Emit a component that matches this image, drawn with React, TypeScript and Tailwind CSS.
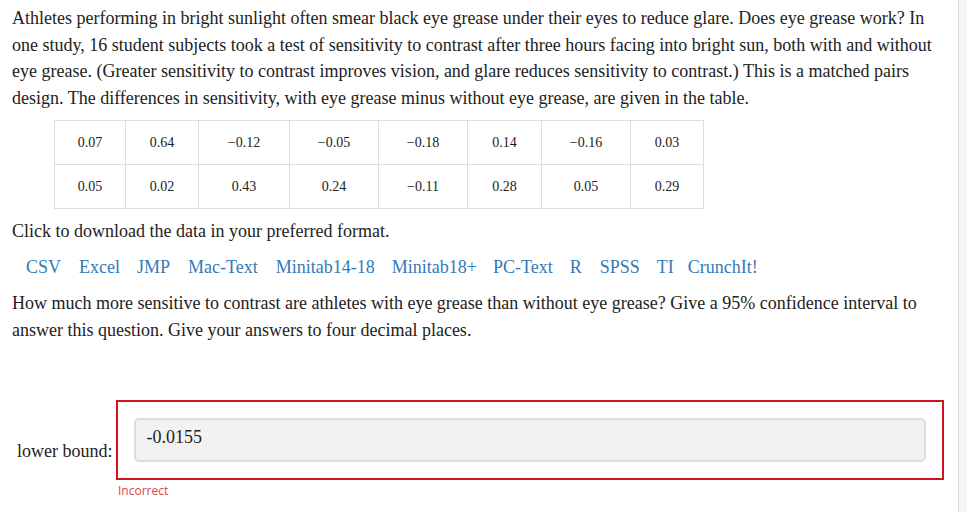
import React from "react";

const row1 = ["0.07", "0.64", "−0.12", "−0.05", "−0.18", "0.14", "−0.16", "0.03"];
const row2 = ["0.05", "0.02", "0.43", "0.24", "−0.11", "0.28", "0.05", "0.29"];
const widths = [71, 73, 91, 89, 89, 74, 89, 73];
const links: [string, string][] = [
  ["CSV", "ml-0"],
  ["Excel", "ml-[18px]"],
  ["JMP", "ml-[17px]"],
  ["Mac-Text", "ml-[18px]"],
  ["Minitab14-18", "ml-[18px]"],
  ["Minitab18+", "ml-[17px]"],
  ["PC-Text", "ml-[16px]"],
  ["R", "ml-[17px]"],
  ["SPSS", "ml-[18px]"],
  ["TI", "ml-[17px]"],
  ["CrunchIt!", "ml-[14px]"],
];

export default function App() {
  return (
    <div
      className="flex h-[512px] w-[967px] overflow-hidden bg-white text-[#222]"
      style={{ fontFamily: '"Liberation Serif", "Times New Roman", serif' }}
    >
      <div className="flex-1 min-w-0 pl-[12px] pr-[10px] pt-[5px]">
        <p className="text-[18px] leading-[26.7px]">
          Athletes performing in bright sunlight often smear black eye grease under their eyes to reduce glare. Does eye grease work? In one study, 16 student subjects took a test of sensitivity to contrast after three hours facing into bright sun, both with and without eye grease. (Greater sensitivity to contrast improves vision, and glare reduces sensitivity to contrast.) This is a matched pairs design. The differences in sensitivity, with eye grease minus without eye grease, are given in the table.
        </p>
        <table className="ml-[42px] mt-[8px] border-collapse text-[14px]">
          <tbody>
            {[row1, row2].map((row, ri) => (
              <tr key={ri}>
                {row.map((v, i) => (
                  <td
                    key={i}
                    className="h-[44px] border border-[#dddddd] p-0 text-center align-middle"
                    style={{ width: widths[i] }}
                  >
                    {v}
                  </td>
                ))}
              </tr>
            ))}
          </tbody>
        </table>
        <p className="mt-[9px] text-[18px] leading-[26.7px]">Click to download the data in your preferred format.</p>
        <div className="mt-[9px] flex pl-[14px] text-[18px] leading-[26.7px] text-[#337ab7]">
          {links.map(([l, m]) => (
            <a key={l} href="#" className={`${m} text-[#337ab7]`}>
              {l}
            </a>
          ))}
        </div>
        <p className="mt-[10px] text-[18px] leading-[26.7px]">
          How much more sensitive to contrast are athletes with eye grease than without eye grease? Give a 95% confidence interval to answer this question. Give your answers to four decimal places.
        </p>
        <div className="mt-[56px] flex items-end">
          <label className="mb-[16px] ml-[5px] mr-[4px] text-[18px] leading-[26px]">lower bound:</label>
          <div className="mr-[4px] flex-1 border-2 border-[#d0121f] px-[16px] py-[16px]">
            <div className="flex h-[44px] items-center rounded-[5px] border-2 border-[#dedede] bg-[#f2f2f2] px-[10px] pb-[4px] text-[18px]">
              -0.0155
            </div>
          </div>
        </div>
        <div
          className="mt-[3px] pl-[106px] text-[12px] leading-[16px] text-[#e0404f]"
          style={{ fontFamily: '"Open Sans", "Noto Sans", sans-serif' }}
        >
          Incorrect
        </div>
      </div>
      <div className="h-full w-[9px] shrink-0 border-l border-[#e2e2e2] bg-[#f4f4f4]" />
    </div>
  );
}
